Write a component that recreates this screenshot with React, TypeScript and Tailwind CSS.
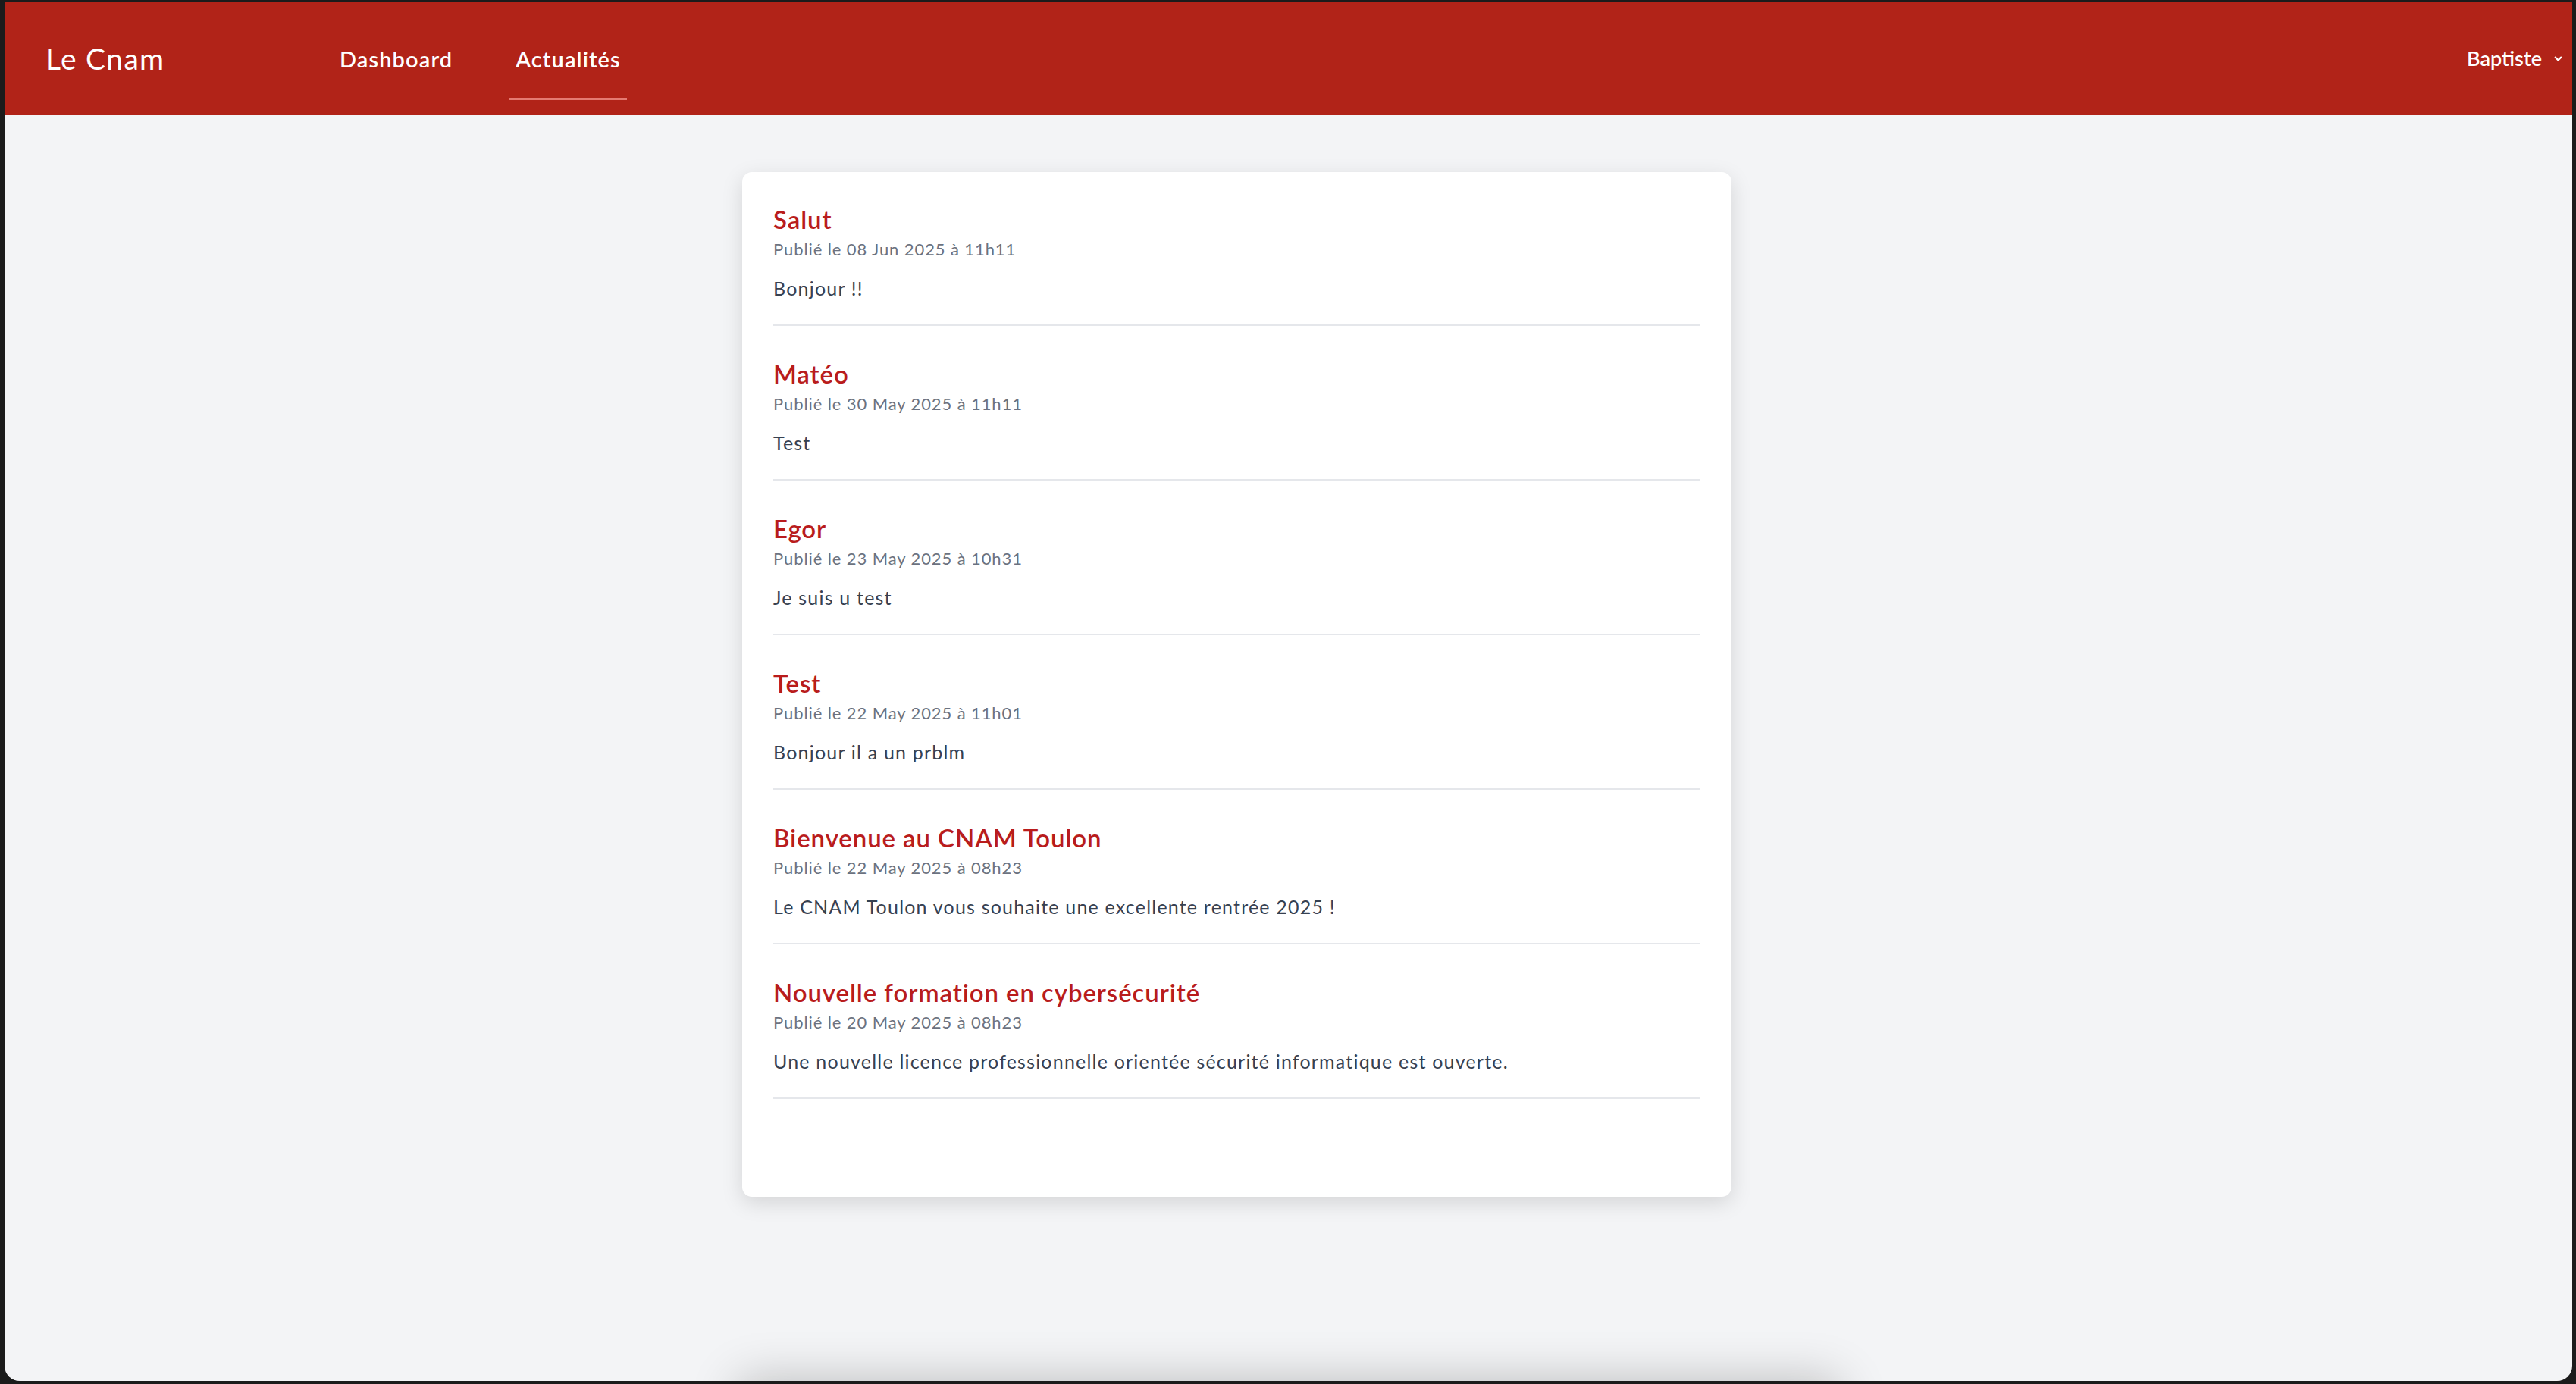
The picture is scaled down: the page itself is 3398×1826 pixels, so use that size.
import { ChevronDown } from 'lucide-react';

type Post = {
  title: string;
  date: string;
  body: string;
};

const posts: Post[] = [
  { title: 'Salut', date: 'Publié le 08 Jun 2025 à 11h11', body: 'Bonjour !!' },
  { title: 'Matéo', date: 'Publié le 30 May 2025 à 11h11', body: 'Test' },
  { title: 'Egor', date: 'Publié le 23 May 2025 à 10h31', body: 'Je suis u test' },
  { title: 'Test', date: 'Publié le 22 May 2025 à 11h01', body: 'Bonjour il a un prblm' },
  {
    title: 'Bienvenue au CNAM Toulon',
    date: 'Publié le 22 May 2025 à 08h23',
    body: 'Le CNAM Toulon vous souhaite une excellente rentrée 2025 !',
  },
  {
    title: 'Nouvelle formation en cybersécurité',
    date: 'Publié le 20 May 2025 à 08h23',
    body: 'Une nouvelle licence professionnelle orientée sécurité informatique est ouverte.',
  },
];

function Header() {
  return (
    <header className="flex h-[149px] shrink-0 items-center bg-[#b12318] pl-[54px] pr-[11px] text-white">
      <div className="w-[380px] text-[39px] font-normal leading-none tracking-[1.3px]">Le Cnam</div>
      <nav className="flex items-center gap-[67px]">
        <a className="border-b-[3px] border-transparent px-2 pb-[33px] pt-[36px] text-[29px] font-semibold leading-[36px] tracking-[1.1px]">
          Dashboard
        </a>
        <a className="border-b-[3px] border-[#e57a72] px-2 pb-[33px] pt-[36px] text-[29px] font-semibold leading-[36px] tracking-[1.1px]">
          Actualités
        </a>
      </nav>
      <div className="ml-auto flex items-center gap-[14px] text-[27px] font-semibold">
        <span>Baptiste</span>
        <ChevronDown className="h-[15px] w-[15px]" strokeWidth={3.5} />
      </div>
    </header>
  );
}

function PostItem({ post }: { post: Post }) {
  return (
    <div className="mb-[43px] border-b-2 border-[#e5e7eb] pb-[30px]">
      <h2 className="text-[33px] font-semibold leading-[40px] tracking-[0.9px] text-[#b91c1c]">{post.title}</h2>
      <p className="mt-[5px] text-[22px] leading-[30px] tracking-[0.9px] text-[#6b7280]">{post.date}</p>
      <p className="mt-[18px] text-[25px] leading-[36px] tracking-[1.2px] text-[#374151]">{post.body}</p>
    </div>
  );
}

export default function App() {
  return (
    <div
      className="h-[1826px] w-[3398px] overflow-hidden bg-[#1b1b1b] pb-[4px] pl-[6px] pr-[5px] pt-[3px]"
      style={{ fontFamily: 'Lato, "Noto Sans", sans-serif' }}
    >
      <div className="flex h-full flex-col overflow-hidden rounded-b-[20px] bg-[#f3f4f6]">
        <Header />
        <main className="flex flex-col pl-[973px] pt-[75px]">
          <section className="w-[1305px] rounded-[13px] bg-white px-[41px] pb-[86px] pt-[42px] shadow-[0_8px_28px_rgba(0,0,0,0.13)]">
            {posts.map((p) => (
              <PostItem key={p.title} post={p} />
            ))}
          </section>
        </main>
        <div className="mx-auto mt-[243px] h-[200px] w-[1450px] shrink-0 bg-white shadow-[0_0_60px_rgba(0,0,0,0.24)]" />
      </div>
    </div>
  );
}
